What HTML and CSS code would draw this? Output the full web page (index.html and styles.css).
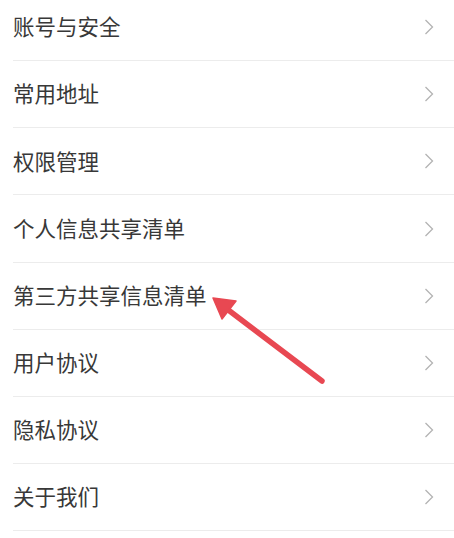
FILE: index.html
```html
<!DOCTYPE html>
<html lang="zh-CN">
<head>
<meta charset="utf-8">
<link rel="stylesheet" href="styles.css">
</head>
<body>
<ul class="menu">
  <li class="row"><span class="label">账号与安全</span><svg class="chev" viewBox="0 0 10 16"><path d="M1.5 1 L8.5 8 L1.5 15"/></svg></li>
  <li class="row"><span class="label">常用地址</span><svg class="chev" viewBox="0 0 10 16"><path d="M1.5 1 L8.5 8 L1.5 15"/></svg></li>
  <li class="row"><span class="label">权限管理</span><svg class="chev" viewBox="0 0 10 16"><path d="M1.5 1 L8.5 8 L1.5 15"/></svg></li>
  <li class="row"><span class="label">个人信息共享清单</span><svg class="chev" viewBox="0 0 10 16"><path d="M1.5 1 L8.5 8 L1.5 15"/></svg></li>
  <li class="row"><span class="label">第三方共享信息清单</span><svg class="chev" viewBox="0 0 10 16"><path d="M1.5 1 L8.5 8 L1.5 15"/></svg></li>
  <li class="row"><span class="label">用户协议</span><svg class="chev" viewBox="0 0 10 16"><path d="M1.5 1 L8.5 8 L1.5 15"/></svg></li>
  <li class="row"><span class="label">隐私协议</span><svg class="chev" viewBox="0 0 10 16"><path d="M1.5 1 L8.5 8 L1.5 15"/></svg></li>
  <li class="row"><span class="label">关于我们</span><svg class="chev" viewBox="0 0 10 16"><path d="M1.5 1 L8.5 8 L1.5 15"/></svg></li>
</ul>
<svg class="arrow" width="454" height="538" viewBox="0 0 454 538">
  <line x1="322" y1="381" x2="227" y2="309" stroke="#e84852" stroke-width="5.5" stroke-linecap="round"/>
  <polygon points="213,298 236,301 222,319" fill="#e84852" stroke="#e84852" stroke-width="1.5" stroke-linejoin="round"/>
</svg>
</body>
</html>
```

FILE: styles.css
```css
html, body {
  margin: 0;
  padding: 0;
  background: #ffffff;
  overflow: hidden;
}
body {
  position: relative;
  width: 454px;
  height: 538px;
  font-family: "Noto Sans CJK SC", "Noto Sans", sans-serif;
}
.menu {
  list-style: none;
  margin: -6px 0 0 13px;
  padding: 0;
}
.row {
  display: flex;
  align-items: center;
  justify-content: space-between;
  height: 66.17px;
  border-bottom: 1px solid #ececec;
  padding-right: 20px;
}
.label {
  font-size: 21.5px;
  color: #383838;
  line-height: 1;
  padding-bottom: 2px;
}
.chev {
  width: 10px;
  height: 16px;
  fill: none;
  stroke: #b3b3b3;
  stroke-width: 1.3;
}
.arrow {
  position: absolute;
  left: 0;
  top: 0;
  pointer-events: none;
}
```
